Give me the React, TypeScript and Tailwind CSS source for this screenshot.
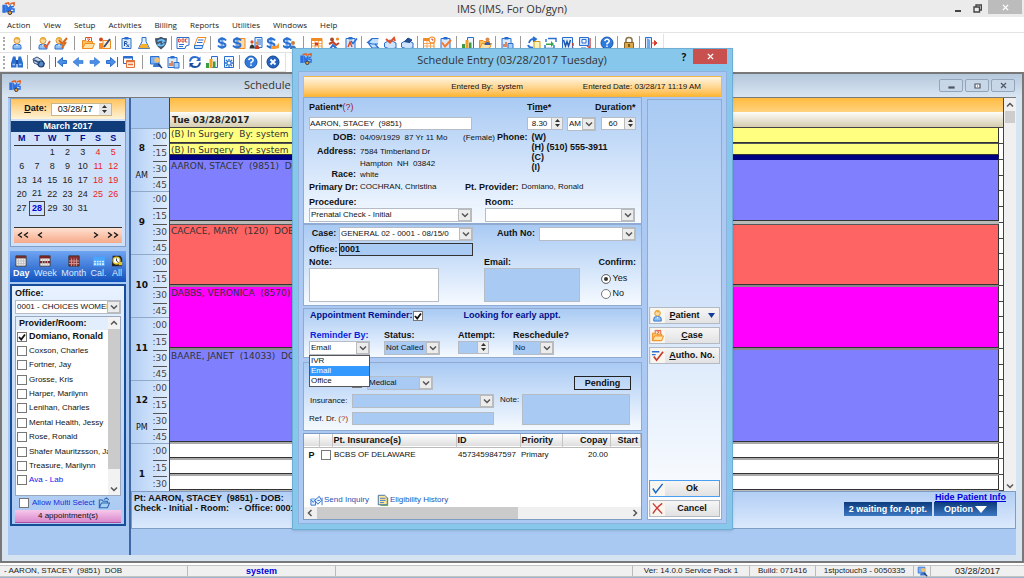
import React, { useState } from 'react';

/* ---------- icons ---------- */

const B = '#2a6fd0';
const O = '#f08a24';

const Person = ({ x = 0, y = 0 }: { x?: number; y?: number }) => (
  <g transform={`translate(${x} ${y})`}>
    <path d="M3 13V10.5Q3 8.5 5 8.3H9Q11 8.5 11 10.5V13Z" fill="#8fc1f5" stroke={B} />
    <circle cx="7" cy="4.6" r="3" fill="#fbd9a0" stroke="#d9962f" />
    <path d="M4 4Q4.500 1 7 1T10 4Q7 3.600 6 3Q5.500 4 4 4Z" fill="#efae3b" />
    <path d="M6 8.5L7 10.500L8 8.500" fill="#fff" />
  </g>
);

const Sheet = ({ c = B }: { c?: string }) => (
  <path d="M2.500 1.500H11.500V12.500H2.500Z" fill="#f2f8ff" stroke={c} />
);

const Dollar = ({ x = 0 }: { x?: number }) => (
  <g transform={`translate(${x} 0)`} fill="none">
    <path d="M7 1V13" stroke="#6fa8ee" strokeWidth="3" />
    <path
      d="M11 4.500Q10 2.800 7 2.800Q3.800 2.800 3.800 5Q3.800 6.600 7 7Q10.500 7.400 10.500 9.300Q10.500 11.200 7 11.200Q4 11.200 3 9.500"
      stroke={B}
      strokeWidth="1.900"
    />
  </g>
);

const Folder = () => (
  <>
    <path d="M1.500 12.500V4.500H5L6 5.500H11.500V12.500Z" fill="#fbc25c" stroke={O} />
    <path d="M1.500 12.500L4 7.500H13.500L11.500 12.500Z" fill="#ffe3a5" stroke={O} />
  </>
);

const Tick = ({ c = '#e2572b' }: { c?: string }) => (
  <path d="M7 9L9 11.500L13 5" fill="none" stroke={c} strokeWidth="1.800" />
);

const Chart = () => (
  <>
    <path d="M6.500 1.500H12.500V12.500H6.500Z" fill="#eaf3ff" stroke={B} />
    <path d="M1 8H4V13H1Z" fill="#3a9d45" />
    <path d="M4.500 4H7.500V13H4.500Z" fill="#f0a124" />
    <path d="M8 6.500H10.500V13H8Z" fill="#3a9d45" />
  </>
);

const Clip = () => (
  <>
    <path d="M2 2.500H11V12.500H2Z" fill="#d9e9fc" stroke={B} />
    <path d="M4.500 1H8.500V3.500H4.500Z" fill={B} />
  </>
);

const CalGrid = ({ c = B }: { c?: string }) => (
  <>
    <path d="M1.500 2.500H12V12.500H1.500Z" fill="#fff" stroke={c} />
    <path d="M1.500 2H12V5H1.500Z" fill={c} />
    <path d="M2 7.500H12M2 10H12M5 5V12M8.500 5V12" stroke={c} strokeWidth="0.700" />
  </>
);

const icons: Record<string, React.ReactNode> = {
  person: <Person />,
  personTick: <><Person x={-1} /><Tick /></>,
  personEdit: <><Person x={-2} /><path d="M5 4L8 8L13 2M8 12L12 6" fill="none" stroke="#d96a1d" strokeWidth="2" /></>,
  folder: <><path d="M4.500 1.500H10.500V7H4.500Z" fill="#fff" stroke="#e0522c" /><path d="M6 3H9L6.500 5.500" fill="none" stroke="#e0522c" /><Folder /></>,
  personPen: <><circle cx="3" cy="3.500" r="2" fill="#d4471d" /><path d="M1 13V7H5L7 9V13Z" fill="#f58a2b" /><path d="M5 4.500H12.500V12.500H5Z" fill="#fff0d0" stroke={O} /><path d="M6 11L12 3" stroke="#3b4d78" strokeWidth="1.800" /></>,
  rx: <><Clip /><path d="M4.500 10V5.500H6.500Q7.500 6.500 6.500 7.500H4.500M6 7.500L9 11M9 8.500L6.500 11" fill="none" stroke="#1c4f9e" /></>,
  flask: <><path d="M5 1.500H9V5.500L12.500 12.500H1.500L5 5.500Z" fill="#e2f1ff" stroke={B} /><path d="M4 8H10L12 12.200H2Z" fill="#f6b02e" /></>,
  shield: <><path d="M7 0.700Q10 2.500 13 2.300Q13 10 7 13.500Q1 10 1 2.300Q4 2.500 7 0.700Z" fill="#44576b" /><path d="M3.500 5.500Q7 2.500 10.500 5L8 6.500M10.500 7.500Q8 11 4 9L6.500 7.500" fill="none" stroke="#6ec3ff" strokeWidth="1.500" /></>,
  doc: <><path d="M1 1.500H13V9Q9 9 9 12.500H1Z" fill="#fff" stroke={B} /><path d="M2.500 3V6H4L4.500 4.500L4 3ZM6 3H8V6H6ZM11.500 3H9.500V6H11.500" fill="none" stroke="#d0432b" strokeWidth="0.900" /><path d="M3 8.500H8M3 10.500H7" stroke={B} /></>,
  slant: <><path d="M4.500 1.500H13L10 9.500H1.500Z" fill="#fff" stroke={O} /><path d="M1.500 9.500H10L9 12.500H1.500ZM5 4H10.500M4 6.500H9.500" fill="#cfe4ff" stroke={B} /></>,
  dollar: <Dollar />,
  dollarDoc: <><path d="M6 2.500H13V12.500H6Z" fill="#ffd9a6" stroke={O} /><Dollar x={-2} /></>,
  report: <><path d="M6 1.500H13V11.500H6Z" fill="#dfeeff" stroke={B} /><path d="M8 4H12M8 6H12M8 8H12" stroke={B} /><circle cx="3" cy="6" r="1.700" fill="#d9542d" /><path d="M0.500 12.500Q1 8.500 3 8.500T6 12.500Z" fill="#333" /><circle cx="8" cy="7" r="1.500" fill="#e58e37" /><path d="M6 13Q6 9 8 9T10.500 13Z" fill="#c93d22" /></>,
  dollarHand: <><Dollar x={-2} /><path d="M5 10H10L13 7V12L9 13H5Z" fill="#f79a35" /></>,
  dollarPerson: <><Dollar x={-3} /><circle cx="10" cy="7" r="2" fill="#c9803d" /><path d="M7 13Q7 9.500 10 9.500T13 13Z" fill="#3d76bd" /></>,
  calOrange: <><CalGrid c={O} /><path d="M5 6.500H8V9.500H5Z" fill="#d33" /></>,
  people: <><circle cx="5" cy="3.500" r="2" fill="#a74b2b" /><path d="M2 8L6 6L9 9L12 7" fill="none" stroke="#c4411f" strokeWidth="2" /><path d="M3 13L6 9L10 13" fill="none" stroke={B} strokeWidth="2" /><circle cx="10.500" cy="3" r="1.600" fill={O} /></>,
  card: <><Clip /><path d="M4 11L6 6L8 11" fill="none" stroke="#e0451f" strokeWidth="1.400" /><path d="M7 5L9 7.500L13 2.500" fill="none" stroke={B} strokeWidth="1.500" /></>,
  back: <path d="M12.500 2.500H6L1.500 6.500L6 8H12M6 3L2 6.500L6 12H12.500L9 8" fill="#bfe0ff" stroke={B} strokeWidth="1.200" />,
  mailIn: <><path d="M1.500 7L7 4L13 7V12L7 13L1.500 11Z" fill="#cfe4ff" stroke={B} /><path d="M3 3L7 6.500L11 2L12 5" fill="none" stroke="#e0532a" strokeWidth="2" /></>,
  mailOut: <><path d="M1.500 7L7 4L13 7V12L7 13L1.500 11Z" fill="#cfe4ff" stroke={B} /><path d="M4 6L8 2L12 4L9 7" fill="#274f93" stroke="#274f93" /></>,
  calClock: <><CalGrid c={O} /><circle cx="10" cy="4" r="3" fill="#fff" stroke={O} strokeWidth="1.200" /><path d="M10 2.500V4H11.500" fill="none" stroke="#c33" /></>,
  clipTick: <><Clip /><path d="M3 6.500L6 10.500L12 4" fill="none" stroke="#f5792b" strokeWidth="2" /></>,
  chart: <Chart />,
  folderUser: <><Folder /><circle cx="9.500" cy="3.500" r="2" fill="#d98b4d" /><path d="M6.500 9Q6.500 6 9.500 6T12.500 9Z" fill="#335da0" /></>,
  clipChart: <><Clip /><path d="M4 8V11M6 6V11" stroke="#d95e27" strokeWidth="1.400" /><path d="M8 7.500H13V13H8Z" fill="#a9d0fa" stroke={B} /></>,
  swap: <><path d="M2 7Q3 2.500 8 3M6 1L9 3L6 5.500" fill="none" stroke={B} strokeWidth="1.800" /><path d="M7 5.500H13V12.500H7Z" fill="#fff3b8" stroke="#c79b1b" /><path d="M1 9Q2 12 6 11.500" fill="none" stroke={B} strokeWidth="1.800" /></>,
  transfer: <><path d="M4 2.500H12V6M2 6V3M1 9V12.500H10V9" fill="none" stroke={B} strokeWidth="1.400" /><path d="M2 7.500H7V5L10 8L7 11V9H2Z" fill="#35a34a" /></>,
  word: <><path d="M1.500 1.500H11.500V12.500H1.500Z" fill="#e4effd" stroke={B} /><path d="M2.500 4L4.500 10L6 5.500L7.500 10L9.500 4" fill="none" stroke="#1c55ac" strokeWidth="1.500" /><path d="M12 7V10M12 11.500V13" stroke="#e23b23" strokeWidth="1.500" /></>,
  monitor: <><path d="M1.500 1.500H10.500V9.500H1.500Z" fill="#d5e8ff" stroke={B} /><path d="M4 3.500H8V7H4Z" fill="#fff" stroke={B} /><path d="M3 12H8" stroke={B} /><path d="M12 2V12L9 10" fill="none" stroke="#c44" strokeWidth="1.400" /></>,
  help: <><circle cx="7" cy="7" r="6" fill="#2f7bdd" stroke="#1b57aa" /><path d="M4.800 5.200Q5 3.300 7 3.300T9.200 5.200Q9.200 6.300 7 7.500V8.500M7 9.600V11" fill="none" stroke="#fff" strokeWidth="1.500" /></>,
  lock: <><path d="M4 7V4Q4 1.500 7 1.500T10 4V7" fill="none" stroke="#8b7344" strokeWidth="1.500" /><path d="M2.500 6.500H11.500V12.500H2.500Z" fill="#dca749" stroke="#8a6424" /><path d="M7 8V11" stroke="#5d4213" strokeWidth="1.500" /></>,
  exit: <><path d="M1.500 1.500H7.500V12.500H1.500Z" fill="#d9e9fc" stroke={B} /><path d="M3 2L6 4V13L3 12Z" fill="#6ea8ee" /><path d="M8 7H12M10.500 4.500L13 7L10.500 9.500Z" fill="#d8402b" stroke="#d8402b" /></>,
  find: <><path d="M3 1.500H5.500L6.500 7V12.500H1V8ZM8.500 1.500H11L13 8V12.500H7.500V7Z" fill={B} /><path d="M6 5H8V9H6Z" fill="#1950a5" /><path d="M2.500 9.500H5M9 9.500H11.500" stroke="#9fc8ff" strokeWidth="1.400" /></>,
  scope: <><path d="M1 4L5 2L10 5L12.500 9L9 11L2 8Z" fill="#c9d6e8" stroke="#30527f" /><circle cx="9" cy="9" r="3" fill="#5586c8" stroke="#1e3d6d" strokeWidth="1.200" /><path d="M2 5L8 8" stroke="#30527f" strokeWidth="1.400" /></>,
  first: <path d="M1.500 2V12M12.500 5.500H8.500V2.500L3.500 7L8.500 11.500V8.500H12.500Z" fill="#4a8ee6" stroke={B} />,
  prev: <path d="M12 5.500H7.500V2.500L2 7L7.500 11.500V8.500H12Z" fill="#4a8ee6" stroke={B} strokeWidth="0.600" />,
  next: <path d="M2 5.500H6.500V2.500L12 7L6.500 11.500V8.500H2Z" fill="#4a8ee6" stroke={B} strokeWidth="0.600" />,
  last: <path d="M12.500 2V12M1.500 5.500H5.500V2.500L10.500 7L5.500 11.500V8.500H1.500Z" fill="#4a8ee6" stroke={B} />,
  windows: <><path d="M1.500 1.500H10.500V8.500H1.500Z" fill="#fff" stroke={B} /><path d="M1.500 2.500H10.500" stroke={B} strokeWidth="2" /><path d="M4.500 5.500H12.500V12.500H4.500Z" fill="#fff4e6" stroke="#e4713b" /><path d="M4.500 6.500H12.500M6 9.500H11" stroke="#e4713b" strokeWidth="1.600" /></>,
  userSearch: <><path d="M1.500 1.500H10V9H1.500Z" fill="#7fb1f0" stroke={B} /><circle cx="8" cy="5" r="2.600" fill="#f4c16e" /><path d="M4 12Q4 8 8 8T12 12Z" fill="#3c78cd" /><path d="M9 9L13 13" stroke="#223e78" strokeWidth="1.500" /></>,
  refresh: <><path d="M2 6.500Q2.500 2 7 2Q10 2 11 4" fill="none" stroke={B} strokeWidth="2" /><path d="M12.500 1.500V6H8Z" fill={B} /><path d="M12 7.500Q11.500 12 7 12Q4 12 3 10" fill="none" stroke="#174f9e" strokeWidth="2" /><path d="M1.500 12.500V8H6Z" fill="#174f9e" /></>,
  docGear: <><Sheet /><path d="M7 4V12M3 8H11M4 5L10 11M10 5L4 11" stroke={B} strokeWidth="1.300" /><circle cx="7" cy="8" r="1.500" fill="#fff" /></>,
  close: <><circle cx="7" cy="7" r="6" fill="#2464c0" stroke="#164488" /><path d="M4.500 4.500L9.500 9.500M9.500 4.500L4.500 9.500" stroke="#fff" strokeWidth="1.800" /></>,
  tickList: <><path d="M1 3H9M1 6H5" stroke={B} strokeWidth="1.500" /><path d="M3 8L6 12L13 3" fill="none" stroke="#c9362c" strokeWidth="1.800" /></>,
  ok: <path d="M2 7L5 11.500L12.500 2" fill="none" stroke="#1c66cc" strokeWidth="1.600" />,
  cancel: <path d="M2 1.500Q6 6 12 12.500M12 1.500Q6 6 2 12.500" fill="none" stroke="#cb3a37" strokeWidth="1.500" />,
  send: <><path d="M1 5.500H6V12H1Z" fill="#e4f0ff" stroke={B} /><path d="M1 6L3.500 9L6 6M5 7L10 2.500L12.500 7L8.500 11ZM8 7H10.500M13 4V12" fill="#e4f0ff" stroke={B} /></>,
  history: <><path d="M1.500 1.500H9L12 4.500V12.500H1.500Z" fill="#ffe795" stroke="#2f62a5" /><path d="M3.500 5H10M3.500 7.500H10M3.500 10H8" stroke={B} /><path d="M12.500 4V13.500H4" fill="none" stroke="#4c9c3b" /></>,
  blueFolder: <path d="M1.500 12.500V3.500H5L6 5H11V7M1.500 12.500L4 7H13.500L11 12.500ZM7 3L10 1L12.500 3.500" fill="#a8d0f7" stroke="#2b65ae" strokeWidth="1.200" />,
  day: <><path d="M1 1H13V13H1Z" fill="#eee" stroke="#333" /><path d="M1 1H13V4H1Z" fill="#6e2f2f" /><path d="M4 4V13M7 4V13M10 4V13M1 7H13M1 10H13" stroke="#bbb" /></>,
  week: <><path d="M1 1H13V13H1Z" fill="#eee" stroke="#333" /><path d="M1 1H13V4H1ZM1 7H13V9.500H1Z" fill="#7a2323" /><path d="M4 4V13M7 4V13M10 4V13" stroke="#bbb" /></>,
  month: <><path d="M1 1H13V13H1Z" fill="#8e2d2d" stroke="#333" /><path d="M4 4V13M7 4V13M10 4V13M1 7H13M1 10H13" stroke="#d7a3a3" /></>,
  cal: <><path d="M0.500 3.500H13.500V12.500H0.500Z" fill="#d9ecff" stroke="#3c9bff" /><path d="M1 3H13V6H1ZM3 1V4M11 1V4" fill="#48a6ff" stroke="#48a6ff" strokeWidth="1.500" /><path d="M4 6V12M7 6V12M10 6V12M1 9H13" stroke="#48a6ff" /></>,
  all: <><path d="M2 1H11L13 4V13H1Z" fill="#222" /><circle cx="6.500" cy="6.500" r="4" fill="#fff" stroke="#e3c322" strokeWidth="1.500" /><path d="M6.500 4V7L9 9" fill="none" stroke="#222" /><path d="M9 8H13V12H9Z" fill="#e3c322" /></>,
  ims: <><path d="M1 3.500H3.500V11H1ZM5 11V4L7 7L9 4V11" fill="#2d6fe0" stroke="#2d6fe0" strokeWidth="1.200" /><path d="M13 5H10.500V7.500H13V10.500H10" fill="none" stroke="#2d6fe0" strokeWidth="1.500" /><path d="M3 2L7 1L8 3M9 2L13 1V4" fill="none" stroke="#e0602a" strokeWidth="1.700" /><circle cx="8.500" cy="11.500" r="2" fill="#e79c35" stroke="#333" /></>,
};

const Icon: React.FC<{ name: string; className?: string }> = ({ name, className = 'size-[13px]' }) => (
  <svg viewBox="0 0 14 14" className={`shrink-0 ${className}`} aria-hidden="true">{icons[name]}</svg>
);

/* ---------- small controls ---------- */

const Chevron = ({ up = false }: { up?: boolean }) => (
  <svg viewBox="0 0 8 6" className="h-[6px] w-[8px]" aria-hidden="true">
    <path d={up ? 'M1 4.500L4 1.500L7 4.500' : 'M1 1.500L4 4.500L7 1.500'} fill="none" stroke="#555" strokeWidth="1.500" />
  </svg>
);

interface SelectProps {
  label: string;
  value: string;
  className: string;
  blue?: boolean;
}

const Select: React.FC<SelectProps> = ({ label, value, className, blue }) => (
  <span className={`flex h-[14px] border border-[#b5bcc6] ${blue ? 'bg-[#a9caf3]' : 'bg-white'} ${className}`}>
    <select aria-label={label} className="min-w-0 flex-1 appearance-none overflow-hidden pl-px leading-[12px] outline-none">
      <option>{value}</option>
    </select>
    <span className="flex w-[13px] shrink-0 items-center justify-center border border-[#bbb] bg-[#ececec]">
      <Chevron />
    </span>
  </span>
);

const Spinner: React.FC<SelectProps> = ({ label, value, className, blue }) => (
  <span className={`flex h-[13px] border border-[#b5bcc6] ${blue ? 'bg-[#a9caf3]' : 'bg-white'} ${className}`}>
    <input aria-label={label} defaultValue={value} className="min-w-0 flex-1 text-center leading-[11px] outline-none" />
    <span className="flex w-[11px] shrink-0 items-center justify-center border-l border-[#bbb] bg-[#ececec]">
      <svg viewBox="0 0 7 10" className="h-[10px] w-[7px]" aria-hidden="true">
        <path d="M3.500 1L6 4H1ZM3.500 9L6 6H1Z" fill="#333" />
      </svg>
    </span>
  </span>
);

const Check: React.FC<{ id: string; on?: boolean; label?: string; className?: string }> = ({ id, on, label, className = '' }) => (
  <span className={`relative flex size-[10px] shrink-0 ${className}`}>
    <input id={id} type="checkbox" aria-label={label} defaultChecked={on} className="peer size-full appearance-none border border-[#777] bg-white" />
    <svg viewBox="0 0 10 10" className="pointer-events-none absolute inset-0 hidden peer-checked:block" aria-hidden="true">
      <path d="M2 5L4.200 7.500L8 2.500" fill="none" stroke="#111" strokeWidth="1.800" />
    </svg>
  </span>
);

/* ---------- toolbars ---------- */

const menus = ['Action', 'View', 'Setup', 'Activities', 'Billing', 'Reports', 'Utilities', 'Windows', 'Help'];

// '|' is a narrow separator, '||' a wide one
const mainTools = [
  'person', '||', 'personTick', 'personEdit', '||', 'folder', 'personPen', '|', 'rx', 'flask', 'shield', '|', 'doc', 'slant', '|',
  'dollar', 'dollarDoc', 'report', 'dollarHand', 'dollarPerson', '||', 'calOrange', 'people', 'card', '|', 'back', 'mailIn', 'mailOut', '|',
  'calClock', 'clipTick', '|', 'chart', 'folderUser', '|', 'clipChart', '||', 'swap', 'transfer', 'word', 'monitor', '|', 'help', '|', 'lock', '|', 'exit',
];
const navTools = [
  'find', '|', 'scope', '|', 'first', 'prev', 'next', 'last', 'windows', '||', 'userSearch', 'clipChart', '|',
  'refresh', 'chart', 'docGear', '|', 'help', '|', 'close',
];

const Toolbar: React.FC<{ tools: string[] }> = ({ tools }) => (
  <div className="flex h-[19px] w-fit items-center border-r border-b border-[#e2e2e2] bg-white pr-1 pl-[3px]">
    <span className="mr-[3px] h-[13px] border-l-2 border-dotted border-[#aaa]" />
    {tools.map((t, i) =>
      t[0] === '|' ? (
        <span key={i} className={`flex justify-center ${t === '||' ? 'w-[10px]' : 'w-[5px]'}`}>
          <span className="h-[14px] w-px bg-[#9a9a9a]" />
        </span>
      ) : (
        <button key={i} type="button" aria-label={t} className="flex w-[17px] justify-center">
          <Icon name={t} className="size-[14px]" />
        </button>
      ),
    )}
  </div>
);

/* ---------- sidebar ---------- */

const weeks = [
  ['', '', '1', '2', '3', '4', '5'],
  ['6', '7', '8', '9', '10', '11', '12'],
  ['13', '14', '15', '16', '17', '18', '19'],
  ['20', '21', '22', '23', '24', '25', '26'],
  ['27', '28', '29', '30', '31', '', ''],
];

const views = [['day', 'Day'], ['week', 'Week'], ['month', 'Month'], ['cal', 'Cal.'], ['all', 'All']];

const providers = [
  'Domiano, Ronald', 'Coxson, Charles', 'Fortner, Jay', 'Grosse, Kris', 'Harper, Marilynn', 'Lenihan, Charles',
  'Mental Health, Jessy', 'Rose, Ronald', 'Shafer Mauritzsson, Ja', 'Treasure, Marilynn', 'Ava - Lab',
];

function Arrows({ n, left = false }: { n: number; left?: boolean }) {
  return (
    <svg viewBox="0 0 12 8" className={`h-[8px] w-[12px] ${left ? 'rotate-180' : ''}`} aria-hidden="true">
      <path d={n === 2 ? 'M1 1.500L4.500 4L1 6.500M7 1.500L10.500 4L7 6.500' : 'M4 1.500L7.500 4L4 6.500'} fill="none" stroke="#111" strokeWidth="1.300" />
    </svg>
  );
}

const Sidebar = () => (
  <aside className="flex w-[123px] shrink-0 flex-col border-r-2 border-[#3f67a3] bg-[#a9c9f2] pr-[3px] pl-[2px]">
    <section className="border border-[#7f9fc8] bg-[#cfe1fa]">
      <div className="flex h-[20px] items-center justify-center gap-1 bg-linear-to-b from-[#ffc35a] to-[#fff3d6] text-[9px]">
        <label htmlFor="date" className="font-bold"><u>D</u>ate:</label>
        <span className="flex h-[13px] w-[61px] border border-[#c9b78c] bg-white">
          <input id="date" defaultValue="03/28/17" className="min-w-0 flex-1 text-center leading-[11px] outline-none" />
          <span className="flex w-[12px] items-center justify-center bg-[#e8e8e8]">
            <svg viewBox="0 0 7 10" className="h-[10px] w-[7px]" aria-hidden="true"><path d="M3.500 1L6 4H1ZM3.500 9L6 6H1Z" fill="#333" /></svg>
          </span>
        </span>
      </div>
      <h2 className="mt-[2px] h-[11px] bg-[#103d79] text-center text-[9px] leading-[11px] font-bold text-white">March 2017</h2>
      <table className="mx-[3px] w-[107px] table-fixed border-collapse text-center">
        <thead>
          <tr className="h-[13px] border-b border-[#333] text-[9px] leading-[11px] text-[#000f8f]">
            {['M', 'T', 'W', 'T', 'F', 'S', 'S'].map((d, i) => <th key={i} className="p-0">{d}</th>)}
          </tr>
        </thead>
        <tbody className="text-[9px] leading-[11px] text-[#222]">
          {weeks.map((week, w) => (
            <tr key={w} className="h-[14px]">
              {week.map((d, i) => (
                <td key={i} className={`p-0 ${i > 4 ? 'text-[#ee2222]' : ''} ${d === '28' ? 'border border-[#444] font-bold text-[#0000dd]' : ''}`}>{d}</td>
              ))}
            </tr>
          ))}
        </tbody>
      </table>
      <div className="mx-[3px] mt-[11px] mb-[3px] flex h-[16px] items-center justify-between border-t border-[#333] bg-linear-to-b from-[#ffe0d2] to-[#f5a988] px-[3px]">
        <button type="button" aria-label="Previous year" className="flex"><Arrows n={2} left /></button>
        <button type="button" aria-label="Previous month" className="mr-[38px] flex"><Arrows n={1} left /></button>
        <button type="button" aria-label="Next month" className="flex"><Arrows n={1} /></button>
        <button type="button" aria-label="Next year" className="flex"><Arrows n={2} /></button>
      </div>
    </section>

    <nav className="mt-[4px] flex h-[31px] items-end justify-between bg-linear-to-b from-[#6ea4f2] to-[#0f51bd] px-[3px] pb-[2px] text-[9px] leading-[13px] text-[#dceaff]">
      {views.map(([icon, name]) => (
        <button key={name} type="button" className={`flex flex-col items-center ${name === 'Day' ? 'font-bold text-white' : ''}`}>
          <Icon name={icon} className="size-[12px]" />
          {name}
        </button>
      ))}
    </nav>

    <section className="mt-[2px] flex flex-col border-2 border-[#164c98] bg-linear-to-b from-[#e8f2ff] to-[#a9c9f2] px-[3px]">
      <p className="h-[14px] text-[9px] leading-[14px] font-bold">Office:</p>
      <Select label="Office" value="0001 - CHOICES WOMEN" className="w-full" />
      <div className="mt-[2px] flex h-[180px] border border-[#9aa9bd] bg-white">
        <div className="flex min-w-0 flex-1 flex-col overflow-hidden">
          <h3 className="h-[13px] bg-[#e3eefc] pl-[3px] text-[9px] leading-[13px] font-bold">Provider/Room:</h3>
          <ul className="flex h-[158px] flex-col">
            {providers.map((p, i) => (
              <li key={p} className="flex flex-1 items-center gap-[2px] pl-px">
                <Check id={`prov-${i}`} on={i === 0} />
                <label htmlFor={`prov-${i}`} className={`whitespace-nowrap ${i === 0 ? 'text-[9px] font-bold' : ''} ${i === 10 ? 'text-[#1414ee]' : ''}`}>{p}</label>
              </li>
            ))}
          </ul>
        </div>
        <div className="flex w-[12px] flex-col items-center justify-between bg-[#f2f2f2] py-[3px]">
          <Chevron up />
          <span className="my-[3px] mb-[17px] w-full flex-1 bg-[#cbcbcb]" />
          <Chevron />
        </div>
      </div>
      <div className="flex h-[14px] items-center gap-[3px] pl-1 text-[#1230dd]">
        <Check id="multi" />
        <label htmlFor="multi">Allow Multi Select</label>
        <Icon name="blueFolder" className="size-[12px]" />
      </div>
      <p className="mb-px h-[13px] border-b border-[#b04fa0] bg-linear-to-b from-[#f7c8ea] to-[#d889cd] text-center leading-[12px]">4 appointment(s)</p>
    </section>
  </aside>
);

/* ---------- day view ---------- */

const hours = [
  { h: '8', half: 'AM' }, { h: '9', half: '' }, { h: '10', half: '' }, { h: '11', half: '' }, { h: '12', half: 'PM' }, { h: '1', half: '' },
];

const blocks = [
  { text: '(B) In Surgery  By: system', cls: 'h-[15px] bg-[#ffff80]' },
  { text: '(B) In Surgery  By: system', cls: 'h-[12px] bg-[#ffff80] border-t border-t-[#555]' },
  { text: 'AARON, STACEY  (9851)  DOB', cls: 'h-[66px] bg-[#8080ff] border-t-5 border-t-[#000080]' },
  { text: 'CACACE, MARY  (120)  DOB', cls: 'mt-[3px] h-[61px] bg-[#ff6464] border-t border-t-[#555]' },
  { text: 'DABBS, VERONICA  (8570)', cls: 'h-[63px] bg-[#ff00ff] border-t-2 border-t-[#888]' },
  { text: 'BAARE, JANET  (14033)  DOB', cls: 'h-[94px] bg-[#8080ff] border-t-2 border-t-[#888]' },
  { text: '', cls: 'h-[16px] bg-white border-t-2 border-t-[#aaa]' },
  { text: '', cls: 'h-[16px] bg-white border-t-2 border-t-[#aaa]' },
  { text: '', cls: 'h-[16px] bg-white border-t-2 border-t-[#aaa]' },
];

const DayView = () => (
  <div className="flex">
    <div className="w-[38px] shrink-0 bg-[#a9c9f2] pt-[30px]">
      {hours.map(({ h, half }) => (
        <div key={h} className={`flex overflow-hidden border-t border-[#8fa9c9] bg-linear-to-r from-[#b4d0f5] to-[#dfecfd] font-['DejaVu_Sans'] ${h === '1' ? 'h-[48px]' : 'h-[63px]'}`}>
          <div className="flex w-[22px] flex-col items-center pt-[12px] text-[9px] leading-[14px] font-bold text-[#111]">
            {half ? <><span>{h}</span><span className="mt-[14px] text-[8px] font-normal">{half}</span></> : <span className="pt-[11px]">{h}</span>}
          </div>
          <div className="flex-1 pr-[2px] text-right text-[9px] text-[#444]">
            {[':00', ':15', ':30', ':45'].slice(0, h === '1' ? 3 : 4).map((m, i) => (
              <div key={m} className={`h-[16px] leading-[15px] ${i > 0 ? 'border-t border-[#555]' : ''}`}>{m}</div>
            ))}
          </div>
        </div>
      ))}
    </div>
    <div className="min-w-0 flex-1 border-x border-[#444] bg-[#b9b9b9]">
      <div className="h-[14px] bg-linear-to-b from-[#ffbb3d] to-[#ffd27c]" />
      <h2 className="h-[16px] border-b border-[#444] bg-linear-to-b from-[#fdfcf8] to-[#d6cdb0] pl-[2px] font-['DejaVu_Sans'] text-[9px] leading-[16px] font-bold text-[#222]">Tue 03/28/2017</h2>
      <div className="flex">
        <div className="min-w-0 flex-1">
          {blocks.map((b, i) => (
            <div key={i} className={`overflow-hidden border-r border-b border-[#333] pl-px font-['DejaVu_Sans'] text-[9px] leading-[13px] whitespace-pre text-[#333] ${b.cls}`}>{b.text}</div>
          ))}
        </div>
        <div className="w-[4px] bg-white">
          {Array.from({ length: 23 }, (_, i) => <div key={i} className="h-[15px] border-b border-[#444] not-nth-[4n]:h-[16px]" />)}
        </div>
      </div>
    </div>
    <div className="flex w-[12px] flex-col items-center bg-[#f0f0f0] pt-1 pb-[2px]">
      <Chevron up />
      <span className="mt-[3px] h-[12px] w-[10px] bg-[#cdcdcd]" />
      <span className="flex-1" />
      <Chevron />
    </div>
  </div>
);

const ScheduleWindow = () => (
  <section className="flex flex-1 flex-col border-2 border-[#787878] bg-[#d6e3f1] pb-[6px]">
    <header className="flex h-[23px] items-center bg-linear-to-b from-[#b5c8dc] to-[#d9e5f2] px-[7px]">
      <Icon name="ims" className="size-[12px]" />
      <h1 className="ml-[223px] flex-1 font-['Open_Sans'] text-[11px] text-[#333]">Schedule</h1>
      <div className="flex gap-[2px]">
        {['M4 7H9V8H4Z', 'M4 4H9V8H4ZM6 6H7', 'M4 3L9 8M9 3L4 8'].map((d, i) => (
          <button key={d} type="button" aria-label={['Minimize', 'Restore', 'Close'][i]} className="flex h-[13px] w-[24px] items-center justify-center rounded-xs border border-[#93a5ba] bg-[#c8d7e7]">
            <svg viewBox="0 0 13 11" className="h-[11px] w-[13px]" aria-hidden="true"><path d={d} fill="#fff" stroke="#4d5763" strokeWidth="1.200" /></svg>
          </button>
        ))}
      </div>
    </header>
    <div className="mx-[6px] flex flex-1 border-t border-[#7a7a7a] bg-[#a9c9f2]">
      <Sidebar />
      <div className="flex min-w-0 flex-1 flex-col">
        <DayView />
        <div className="flex h-[38px] border border-[#7f9cc2] bg-linear-to-b from-[#b3cff5] to-[#dbe9fc] pl-[2px] text-[9px] leading-[10px] font-bold">
          <p className="pt-px whitespace-pre text-[#111]">{'Pt: AARON, STACEY  (9851) - DOB:\nCheck - Initial - Room:    - Office: 0001'}</p>
          <div className="ml-auto flex items-end pr-[18px] pb-[12px]">
            <button type="button" className="mr-[2px] h-[14px] bg-linear-to-b from-[#0b3b7c] to-[#3d78c2] px-[5px] text-white">2 waiting for Appt.</button>
            <div className="flex flex-col items-end">
              <a href="#info" className="-mr-[9px] whitespace-nowrap text-[#0000dd] underline">Hide Patient Info</a>
              <button type="button" className="flex h-[14px] w-[63px] items-center justify-center gap-[2px] self-start bg-linear-to-b from-[#0b3b7c] to-[#3d78c2] text-white">
                Option
                <svg viewBox="0 0 12 7" className="h-[7px] w-[12px]" aria-hidden="true"><path d="M0 0H12L6 7Z" fill="#fff" /></svg>
              </button>
            </div>
          </div>
        </div>
      </div>
    </div>
  </section>
);

/* ---------- schedule entry dialog ---------- */

const panel = 'border border-[#8fabd0] bg-linear-to-b from-[#a9caf3] to-[#f6faff] px-[5px]';
const bold = 'text-[9px] font-bold';

const PatientPanel = () => (
  <div className={`h-[127px] ${panel}`}>
    <div className="grid grid-cols-[218px_68px_1fr] pt-[3px]">
      <label htmlFor="patient" className={bold}>Patient*<a href="#help" className="font-normal text-[#a02020]">(?)</a></label>
      <span className={bold}>Ti<u>m</u>e*</span>
      <span className={bold}>D<u>u</u>ration*</span>
    </div>
    <div className="mt-[2px] flex">
      <input id="patient" defaultValue="AARON, STACEY  (9851)" className="h-[13px] w-[163px] border border-[#b5bcc6] bg-white outline-none" />
      <Spinner label="Time" value="8.30" className="ml-[55px] w-[36px]" />
      <Select label="AM or PM" value="AM" className="ml-[4px] h-[13px] w-[29px]" />
      <Spinner label="Duration" value="60" className="ml-[5px] w-[35px]" />
    </div>
    <div className="mt-px flex h-[44px]">
      <dl className="grid w-[188px] grid-cols-[47px_1fr] gap-x-[4px] leading-[11px]">
        <dt className={`text-right ${bold}`}>DOB:</dt>
        <dd className="flex justify-between pr-[2px]"><span>04/09/1929&nbsp; 87 Yr 11 Mo</span><span>(Female)</span></dd>
        <dt className={`pt-[3px] text-right ${bold}`}>Address:</dt>
        <dd className="pt-[3px] leading-[12px]">7584 Timberland Dr<br />Hampton&nbsp; NH&nbsp; 03842</dd>
        <dt className={`-mt-px text-right ${bold}`}>Race:</dt>
        <dd className="-mt-px">white</dd>
      </dl>
      <p className={`leading-[10px] ${bold}`}>Phone:</p>
      <p className={`ml-[4px] leading-[10px] whitespace-pre-line ${bold}`}>{'(W)\n(H) (510) 555-3911\n(C)\n(I)'}</p>
    </div>
    <div className="mt-[5px] flex leading-[12px]">
      <span className={`mr-[4px] w-[47px] whitespace-nowrap ${bold}`}>Primary Dr:</span>
      <span className="w-[105px]">COCHRAN, Christina</span>
      <span className={`mr-[3px] ${bold}`}>Pt. Provider:</span>
      <span>Domiano, Ronald</span>
    </div>
    <div className="mt-[3px] flex leading-[12px]">
      <span className={`w-[176px] ${bold}`}>Procedure:</span>
      <span className={bold}>Room:</span>
    </div>
    <div className="flex gap-[13px]">
      <Select label="Procedure" value="Prenatal Check - Initial" className="w-[163px]" />
      <Select label="Room" value="" className="w-[150px]" />
    </div>
  </div>
);

const CasePanel = () => (
  <div className={`h-[82px] ${panel}`}>
    <div className="flex items-center pt-[2px]">
      <span className={`w-[30px] text-center ${bold}`}>Case:</span>
      <Select label="Case" value="GENERAL 02  -  0001 - 08/15/0" className="w-[134px]" />
      <span className={`ml-[24px] w-[42px] whitespace-nowrap ${bold}`}>Auth No:</span>
      <Select label="Auth No" value="" className="w-[97px]" />
    </div>
    <div className="mt-[2px] flex items-center">
      <label htmlFor="officeNo" className={`w-[30px] ${bold}`}>Office:</label>
      <input id="officeNo" defaultValue="0001" className="h-[13px] w-[134px] border border-[#333] bg-[#a9caf3] text-[9px] font-bold outline-none" />
    </div>
    <div className="flex">
      <div className="w-[176px]">
        <label htmlFor="note" className={`block leading-[11px] ${bold}`}>Note:</label>
        <textarea id="note" className="block h-[34px] w-[130px] resize-none border border-[#b5bcc6] bg-white" />
      </div>
      <div className="w-[115px]">
        <label htmlFor="email" className={`block leading-[11px] ${bold}`}>Email:</label>
        <textarea id="email" className="block h-[34px] w-[96px] resize-none border border-[#b5bcc6] bg-[#a9caf3]" />
      </div>
      <fieldset>
        <legend className={`mb-[4px] leading-[11px] ${bold}`}>Confirm:</legend>
        {['Yes', 'No'].map(v => (
          <label key={v} className="flex h-[15px] items-center gap-[2px] pl-[2px] text-[9px]">
            <input type="radio" name="confirm" defaultChecked={v === 'Yes'} className="size-[10px] appearance-none rounded-full border border-[#777] bg-white checked:bg-[#333] checked:shadow-[inset_0_0_0_2px_#fff]" />
            {v}
          </label>
        ))}
      </fieldset>
    </div>
  </div>
);

const ReminderPanel = () => {
  const [reminder, setReminder] = useState('Email');

  return (
    <div className={`mt-[2px] h-[50px] ${panel}`}>
      <div className={`flex items-center text-[#000f8f] ${bold}`}>
        <label htmlFor="rem" className="pl-px">Appointment Reminder:</label>
        <Check id="rem" on />
        <span className="ml-[41px]">Looking for early appt.</span>
      </div>
      <div className="mt-[6px] flex">
        <div className="relative w-[75px]">
          <p className={`pl-px leading-[12px] text-[#0a1ee0] ${bold}`}>Reminder By:</p>
          <Select label="Reminder by" value={reminder} className="w-[61px]" />
          <ul role="listbox" className="absolute top-[26px] left-0 z-10 h-[32px] w-[61px] border border-[#555] bg-white leading-[10px]">
            {['IVR', 'Email', 'Office'].map(o => (
              <li key={o} role="option" aria-selected={o === reminder} onClick={() => setReminder(o)} className={`pl-px ${o === reminder ? 'bg-[#3399ff] text-white' : ''}`}>{o}</li>
            ))}
          </ul>
        </div>
        <div className="w-[74px]">
          <p className={`leading-[12px] ${bold}`}>Status:</p>
          <Select label="Status" value="Not Called" className="w-[56px]" blue />
        </div>
        <div className="w-[55px]">
          <p className={`leading-[12px] ${bold}`}>Attempt:</p>
          <Spinner label="Attempt" value="" className="w-[31px]" blue />
        </div>
        <div>
          <p className={`leading-[12px] ${bold}`}>Reschedule?</p>
          <Select label="Reschedule" value="No" className="w-[41px]" blue />
        </div>
      </div>
    </div>
  );
};

const InsurancePanel = () => (
  <div className={`mt-[4px] h-[69px] ${panel}`}>
    <div className="flex items-center pt-[13px]">
      <Check id="type" label="Filter by type" className="ml-[43px]" />
      <Select label="Type" value="Medical" className="ml-[5px] w-[66px]" blue />
      <span className={`ml-auto mr-[5px] h-[14px] w-[57px] border border-[#222] text-center leading-[12px] ${bold}`}>Pending</span>
    </div>
    <div className="mt-[4px] flex">
      <div className="w-[191px]">
        <div className="flex items-center">
          <span className="w-[43px] pl-px">Insurance:</span>
          <Select label="Insurance" value="" className="w-[142px]" blue />
        </div>
        <div className="mt-[4px] flex items-center">
          <label htmlFor="ref" className="w-[43px] whitespace-nowrap">Ref. Dr. <a href="#help" className="text-[#a03020]">(?)</a></label>
          <input id="ref" className="h-[13px] w-[142px] border border-[#b5bcc6] bg-[#a9caf3]" />
        </div>
      </div>
      <label htmlFor="insNote" className="w-[22px]">Note:</label>
      <textarea id="insNote" className="block h-[31px] w-[108px] resize-none border border-[#b5bcc6] bg-[#a9caf3]" />
    </div>
  </div>
);

const InsuranceTable = () => (
  <div className="mt-[2px] flex h-[87px] flex-col border border-[#7d9cc4] bg-white">
    <table className="w-full table-fixed border-collapse text-left">
      <colgroup>
        <col className="w-[15px]" /><col className="w-[13px]" /><col className="w-[124px]" /><col className="w-[64px]" />
        <col className="w-[42px]" /><col className="w-[48px]" /><col />
      </colgroup>
      <thead>
        <tr className="h-[13px] border-b border-[#bbb] bg-linear-to-b from-white to-[#dedede] text-[9px] leading-[12px] whitespace-nowrap">
          {['', '', 'Pt. Insurance(s)', 'ID', 'Priority', 'Copay', 'Start'].map((h, i) => (
            <th key={i} className={`border-r border-[#c5c5c5] p-0 ${i > 4 ? 'pr-[2px] text-right' : 'pl-px'}`}>{h}</th>
          ))}
        </tr>
      </thead>
      <tbody>
        <tr className="h-[16px]">
          <td className="p-0 text-center text-[9px] font-bold">P</td>
          <td className="p-0"><Check id="bcbs" label="BCBS of Delaware" className="ml-[2px]" /></td>
          <td className="p-0 pl-[2px]">BCBS OF DELAWARE</td>
          <td className="p-0 pl-[2px]">4573459847597</td>
          <td className="p-0 pl-px">Primary</td>
          <td className="p-0 pr-[2px] text-right">20.00</td>
          <td />
        </tr>
      </tbody>
    </table>
    <div className="mt-auto flex h-[14px] items-center pl-[6px] text-[#1c54b4]">
      <a href="#send" className="mr-[8px] flex items-center gap-px"><Icon name="send" />Send Inquiry</a>
      <a href="#history" className="flex items-center gap-px"><Icon name="history" className="size-[12px]" />Eligibility History</a>
    </div>
    <div className="flex h-[12px] items-center bg-[#f0f0f0] px-[2px]">
      <span className="rotate-90"><Chevron /></span>
      <span className="ml-[3px] h-full w-[201px] bg-[#cbcbcb]" />
      <span className="ml-auto -rotate-90"><Chevron /></span>
    </div>
  </div>
);

const SideButton: React.FC<{ icon: string; children: React.ReactNode; focus?: boolean }> = ({ icon, children, focus }) => (
  <button type="button" className={`flex h-[17px] w-full items-center border bg-linear-to-b from-[#f6f6f6] to-[#e2e2e2] pl-px ${bold} ${focus ? 'border-[#4aa0f0]' : 'border-[#b4bac4]'}`}>
    <span className="flex h-full w-[14px] items-center bg-[#f8f6ee]"><Icon name={icon} /></span>
    <span className="flex flex-1 items-center justify-center whitespace-nowrap">{children}</span>
  </button>
);

const EntryDialog = () => (
  <div role="dialog" aria-label="Schedule Entry" className="absolute top-[48px] left-[292px] z-20 w-[441px] border border-[#6eaed4] bg-[#87c7eb] px-[5px] pb-[5px] shadow">
    <header className="flex h-[22px] items-start">
      <Icon name="ims" className="mt-[4px] ml-[2px] size-[12px]" />
      <h2 className="flex-1 pl-[37px] text-center font-['Open_Sans'] text-[11px] leading-[22px] text-[#333]">Schedule Entry (03/28/2017 Tuesday)</h2>
      <button type="button" className="w-[18px] font-['Open_Sans'] text-[10px] leading-[16px] font-bold">?</button>
      <button type="button" aria-label="Close" className="flex h-[15px] w-[34px] items-center justify-center bg-[#c8504f]">
        <svg viewBox="0 0 8 8" className="size-[7px]" aria-hidden="true"><path d="M1 1L7 7M7 1L1 7" stroke="#fff" strokeWidth="1.600" /></svg>
      </button>
    </header>
    <div className="border border-[#8fb2dc] bg-[#abc9f2] px-[4px] pt-[4px] pb-[3px]">
      <div className="flex h-[21px] items-center justify-end gap-[60px] border border-[#f3b545] bg-linear-to-b from-[#fff6df] to-[#ffb731] pr-[20px]">
        <span>Entered By:&nbsp; system</span>
        <span>Entered Date: 03/28/17 11:19 AM</span>
      </div>
      <div className="flex gap-[5px]">
        <div className="min-w-0 flex-1">
          <PatientPanel />
          <CasePanel />
          <ReminderPanel />
          <InsurancePanel />
          <InsuranceTable />
        </div>
        <div className="mt-[2px] flex w-[75px] flex-col gap-[3px] border border-[#8fabd0] bg-linear-to-b from-[#a9caf3] to-white px-px pt-[207px] pb-[2px]">
          <SideButton icon="person">
            <u>P</u>atient
            <svg viewBox="0 0 7 5" className="ml-[8px] h-[5px] w-[7px]" aria-hidden="true"><path d="M0 0H7L3.500 5Z" fill="#123b9a" /></svg>
          </SideButton>
          <SideButton icon="folder"><u>C</u>ase</SideButton>
          <SideButton icon="tickList"><u>A</u>utho. No.</SideButton>
          <span className="flex-1" />
          <SideButton icon="ok" focus>Ok</SideButton>
          <SideButton icon="cancel">Cancel</SideButton>
        </div>
      </div>
    </div>
  </div>
);

/* ---------- shell ---------- */

const StatusBar = () => (
  <footer className="mt-[2px] flex h-[12px] divide-x divide-[#bbb] border-y border-[#c4c4c4] bg-[#f0f0f0] text-center leading-[10px] whitespace-pre text-[#222]">
    <span className="w-[188px] pl-[4px] text-left">- AARON, STACEY  (9851)  DOB</span>
    <span className="w-[148px] text-[9px] font-bold text-[#0000dd]">system</span>
    <span className="flex-1" />
    <span className="w-[117px]">Ver: 14.0.0 Service Pack 1</span>
    <span className="w-[66px]">Build: 071416</span>
    <span className="w-[98px]">1stpctouch3 - 0050335</span>
    <span className="flex w-[17px] justify-center"><Icon name="userSearch" className="size-[11px]" /></span>
    <span className="w-[93px] text-[9px]">03/28/2017</span>
  </footer>
);

export default function App() {
  return (
    <div className="relative flex min-h-screen flex-col overflow-hidden bg-white font-['Liberation_Sans',Arial,sans-serif] text-[8px] text-[#111]">
      <header className="flex h-[17px] items-center bg-[#ebebeb] pl-[2px]">
        <Icon name="ims" />
        <h1 className="flex-1 pl-[60px] text-center font-['Open_Sans'] text-[11px] leading-[17px] text-[#333]">IMS (IMS, For Ob/gyn)</h1>
        <button type="button" aria-label="Minimize" className="flex w-[18px] justify-center pt-1"><span className="h-[2px] w-[6px] bg-[#444]" /></button>
        <button type="button" aria-label="Restore" className="flex w-[20px] justify-center">
          <svg viewBox="0 0 9 9" className="size-[9px]" aria-hidden="true"><path d="M1 3H6.500V8H1ZM3 3V1H8.500V6H6.500" fill="none" stroke="#444" strokeWidth="1.400" /></svg>
        </button>
        <button type="button" aria-label="Close" className="mr-[2px] ml-[1px] flex h-[14px] w-[34px] items-center justify-center self-start bg-[#bcbcbc]">
          <svg viewBox="0 0 8 8" className="size-[7px]" aria-hidden="true"><path d="M1 1L7 7M7 1L1 7" stroke="#fff" strokeWidth="1.600" /></svg>
        </button>
      </header>
      <nav className="flex h-[16px] items-center gap-[13px] border-b border-[#e4e4e4] pl-[7px] font-['Open_Sans'] leading-[14px] text-[#222]">
        {menus.map(m => <button key={m} type="button">{m}</button>)}
      </nav>
      <div className="h-[39px] pt-px">
        <Toolbar tools={mainTools} />
        <Toolbar tools={navTools} />
      </div>
      <ScheduleWindow />
      <StatusBar />
      <div className="h-px bg-[#9eb3c9]" />
      <EntryDialog />
    </div>
  );
}
